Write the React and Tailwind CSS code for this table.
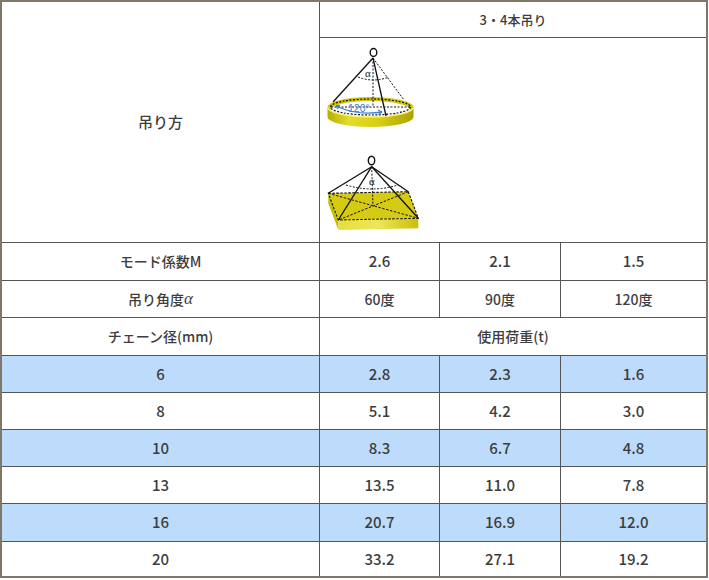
import React from "react";

const FONT = { fontFamily: '"Noto Sans CJK JP", "Noto Sans", sans-serif' };

function Cone() {
  const cx = 44.5, cy = 63, rx = 43, ry = 10, h = 10;
  return (
    <svg width="92" height="86" viewBox="0 0 92 86">
      <defs>
        <linearGradient id="bandC" x1="0" x2="1" y1="0" y2="0">
          <stop offset="0" stopColor="#b8ae00" />
          <stop offset="0.25" stopColor="#e4dc2a" />
          <stop offset="0.6" stopColor="#d8ce10" />
          <stop offset="1" stopColor="#aca200" />
        </linearGradient>
      </defs>
      <ellipse cx={cx} cy={cy} rx={rx} ry={ry} fill="#cfc510" />
      <ellipse cx={cx} cy={cy + 3} rx={rx - 3} ry={ry - 1} fill="#ffffff" />
      <path
        d={`M ${cx - rx} ${cy} A ${rx} ${ry} 0 0 0 ${cx + rx} ${cy} L ${cx + rx} ${cy + h} A ${rx} ${ry} 0 0 1 ${cx - rx} ${cy + h} Z`}
        fill="url(#bandC)"
      />
      <path
        d={`M ${cx - rx} ${cy} A ${rx} ${ry} 0 0 0 ${cx + rx} ${cy}`}
        fill="none"
        stroke="#f3ee8a"
        strokeWidth="1.5"
      />
      <ellipse cx={cx} cy={cy} rx={rx - 3} ry={ry - 2} fill="none" stroke="#111" strokeWidth="1.2" strokeDasharray="2 1.5" />
      <line x1="47" y1="14" x2="47" y2="63" stroke="#111" strokeWidth="1" strokeDasharray="2 1.5" />
      <line x1="47" y1="14" x2="78" y2="56" stroke="#111" strokeWidth="1" strokeDasharray="2 1.5" />
      <line x1="5" y1="63" x2="84" y2="63" stroke="#111" strokeWidth="1" strokeDasharray="2 1.5" />
      <path d="M 32 33 Q 47 39 63 33" fill="none" stroke="#111" strokeWidth="1" strokeDasharray="2 1.5" />
      <line x1="47" y1="14" x2="7" y2="58" stroke="#111" strokeWidth="1.3" />
      <line x1="47" y1="14" x2="60" y2="72" stroke="#111" strokeWidth="1.3" />
      <ellipse cx="47.5" cy="8.5" rx="3.3" ry="4" fill="#fff" stroke="#111" strokeWidth="1.4" />
      <text x="39" y="33" fontSize="11" fill="#222" fontFamily="Liberation Serif, serif">α</text>
      <path d="M 10 62 Q 32 72 56 68" fill="none" stroke="#3b7fd9" strokeWidth="1.3" />
      <path d="M 10 62 l 4 -0.5 M 10 62 l 2 3" stroke="#3b7fd9" strokeWidth="1.3" fill="none" />
      <path d="M 56 68 l -4 -2 M 56 68 l -3.5 2.5" stroke="#3b7fd9" strokeWidth="1.3" fill="none" />
      <text x="22" y="68" fontSize="10.5" fill="#3b7fd9" fontFamily="Liberation Sans, sans-serif">120°</text>
    </svg>
  );
}

function Pyramid() {
  const LB = [2.3, 38.3], RB = [82.3, 36.7], FR = [92.3, 63.3], FL = [12.3, 65];
  const A = [45.7, 11.7];
  const t = 10;
  const p = (a) => `${a[0]} ${a[1]}`;
  return (
    <svg width="96" height="80" viewBox="0 0 96 80">
      <defs>
        <linearGradient id="frontP" x1="0" x2="1" y1="0" y2="0">
          <stop offset="0" stopColor="#e6de3a" />
          <stop offset="0.5" stopColor="#eee65a" />
          <stop offset="1" stopColor="#c9bf05" />
        </linearGradient>
      </defs>
      <polygon points={`${p(LB)} ${p(FL)} ${FL[0]} ${FL[1] + t} ${LB[0]} ${LB[1] + t}`} fill="#c6bc00" />
      <polygon points={`${p(FL)} ${p(FR)} ${FR[0]} ${FR[1] + t} ${FL[0]} ${FL[1] + t}`} fill="url(#frontP)" />
      <polygon points={`${p(LB)} ${p(RB)} ${p(FR)} ${p(FL)}`} fill="#d6cb14" />
      <polygon points={`${p(LB)} ${p(RB)} ${p(FR)} ${p(FL)}`} fill="none" stroke="#111" strokeWidth="1.1" strokeDasharray="2.5 1.5" />
      <line x1={LB[0]} y1={LB[1]} x2={FR[0]} y2={FR[1]} stroke="#111" strokeWidth="1" strokeDasharray="2.5 1.5" />
      <line x1={RB[0]} y1={RB[1]} x2={FL[0]} y2={FL[1]} stroke="#111" strokeWidth="1" strokeDasharray="2.5 1.5" />
      <line x1={A[0]} y1={A[1]} x2="47" y2="51" stroke="#111" strokeWidth="1" strokeDasharray="2 1.5" />
      <path d="M 20 30 Q 46 38 72 30" fill="none" stroke="#111" strokeWidth="1" strokeDasharray="2 1.5" />
      <line x1={A[0]} y1={A[1]} x2={LB[0]} y2={LB[1]} stroke="#111" strokeWidth="1.3" />
      <line x1={A[0]} y1={A[1]} x2={RB[0]} y2={RB[1]} stroke="#111" strokeWidth="1.3" />
      <line x1={A[0]} y1={A[1]} x2={FL[0]} y2={FL[1]} stroke="#111" strokeWidth="1.3" />
      <line x1={A[0]} y1={A[1]} x2={FR[0]} y2={FR[1]} stroke="#111" strokeWidth="1.3" />
      <ellipse cx="45.5" cy="5.5" rx="3.2" ry="4.2" fill="#fff" stroke="#111" strokeWidth="1.4" />
      <text x="43" y="30" fontSize="11" fill="#222" fontFamily="Liberation Serif, serif">α</text>
    </svg>
  );
}

const cell = "flex items-center justify-center border-r border-b border-[#555]";

const data = [
  ["6", "2.8", "2.3", "1.6", true, "h-[37px]"],
  ["8", "5.1", "4.2", "3.0", false, "h-[37px]"],
  ["10", "8.3", "6.7", "4.8", true, "h-[37px]"],
  ["13", "13.5", "11.0", "7.8", false, "h-[37px]"],
  ["16", "20.7", "16.9", "12.0", true, "h-[38px]"],
  ["20", "33.2", "27.1", "19.2", false, "h-[34px]"],
];

export default function App() {
  return (
    <div className="w-[709px] h-[580px] bg-white" style={FONT}>
      <div className="w-[708px] h-[578px] border-2 border-[#7f7868] text-[#3d3d3d] font-medium">
        <div className="grid grid-cols-[318px_120px_121px_1fr]">
          <div className={`${cell} row-span-2 text-[15px]`}>吊り方</div>
          <div className={`${cell} col-span-3 border-r-0 h-[36px] text-[13px]`}>3・4本吊り</div>
          <div className="col-span-3 h-[205px] border-b border-[#555] flex flex-col items-start pl-[6px] pt-[6px] gap-[25px]">
            <Cone />
            <Pyramid />
          </div>

          <div className={`${cell} h-[38px] text-[14px]`}>モード係数M</div>
          <div className={`${cell} text-[15px]`}>2.6</div>
          <div className={`${cell} text-[15px]`}>2.1</div>
          <div className={`${cell} border-r-0 text-[15px]`}>1.5</div>

          <div className={`${cell} h-[37px] text-[14px]`}>吊り角度<span style={{ fontFamily: '"Liberation Serif", serif', fontStyle: "italic", fontSize: 17 }}>α</span></div>
          <div className={`${cell} text-[14px]`}>60度</div>
          <div className={`${cell} text-[14px]`}>90度</div>
          <div className={`${cell} border-r-0 text-[14px]`}>120度</div>

          <div className={`${cell} h-[38px] text-[14px]`}>チェーン径(mm)</div>
          <div className={`${cell} col-span-3 border-r-0 text-[14px]`}>使用荷重(t)</div>

          {data.map(([d, a, b, c, blue, hc], i) => {
            const bg = blue ? "bg-[#bddcfb]" : "bg-white";
            const last = i === data.length - 1 ? "border-b-0" : "";
            return (
              <React.Fragment key={d}>
                <div className={`${cell} ${bg} ${hc} ${last} text-[15px]`}>{d}</div>
                <div className={`${cell} ${bg} ${last} text-[15px]`}>{a}</div>
                <div className={`${cell} ${bg} ${last} text-[15px]`}>{b}</div>
                <div className={`${cell} ${bg} ${last} border-r-0 text-[15px]`}>{c}</div>
              </React.Fragment>
            );
          })}
        </div>
      </div>
    </div>
  );
}
